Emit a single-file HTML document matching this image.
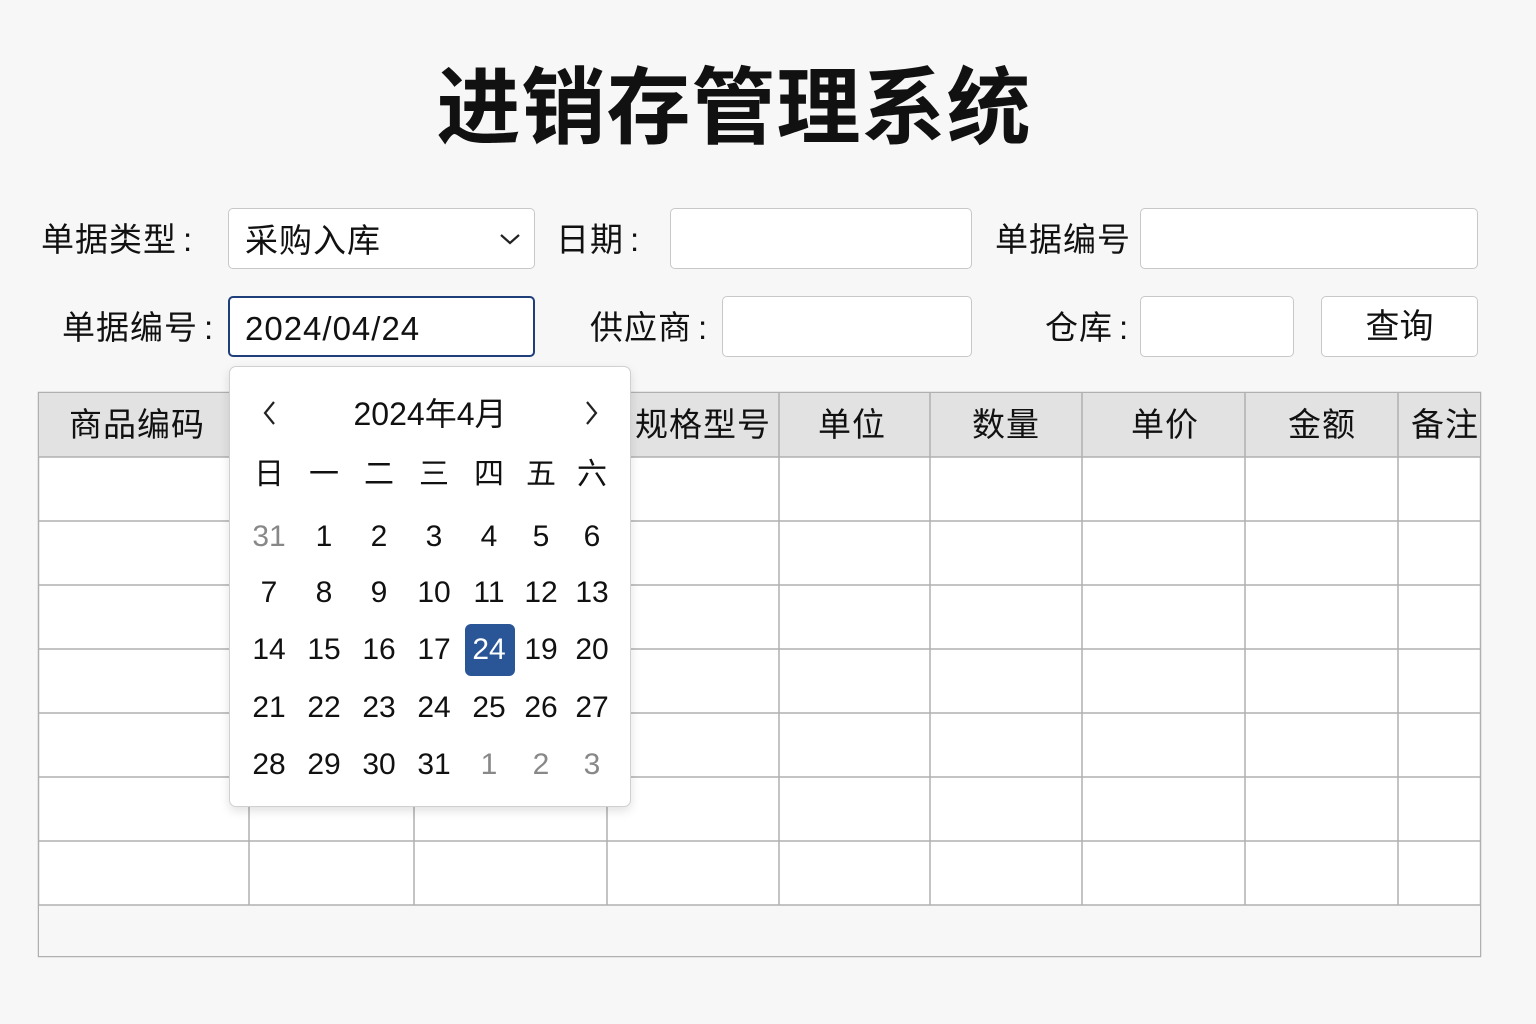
<!DOCTYPE html>
<html><head><meta charset="utf-8"><style>
*{box-sizing:border-box;margin:0;padding:0}
body{width:1536px;height:1024px;background:#f7f7f7;font-family:"Liberation Sans","Noto Sans CJK SC",sans-serif;color:#111;position:relative;overflow:hidden}
.a{position:absolute}
.lbl{position:absolute;font-size:33px;line-height:40px;letter-spacing:1px}
.lbl i{font-style:normal;margin-left:6px}
.box{position:absolute;background:#fff;border:1.5px solid #c8c8c8;border-radius:5px}
.c{position:absolute;font-size:30px;text-align:center;width:50px;margin-left:-25px;line-height:36px}
.g{color:#888}
</style></head><body>
<div class="a" style="left:0;width:1468px;top:56px;text-align:center;font-size:84px;font-weight:bold;line-height:104px;letter-spacing:1px">进销存管理系统</div>

<div class="lbl" style="left:41px;top:220px">单据类型<i>:</i></div>
<div class="box" style="left:228px;top:208px;width:307px;height:61px"></div>
<div class="lbl" style="left:245px;top:221px">采购入库</div>
<svg class="a" style="left:499px;top:231px" width="22" height="16"><path d="M2 4 L11 12 L20 4" fill="none" stroke="#222" stroke-width="2.2"/></svg>
<div class="lbl" style="left:556px;top:220px">日期<i>:</i></div>
<div class="box" style="left:670px;top:208px;width:302px;height:61px"></div>
<div class="lbl" style="left:995px;top:220px">单据编号</div>
<div class="box" style="left:1140px;top:208px;width:338px;height:61px"></div>

<div class="lbl" style="left:62px;top:308px">单据编号<i>:</i></div>
<div class="box" style="left:228px;top:296px;width:307px;height:61px;border:2px solid #1f3f7a"></div>
<div class="lbl" style="left:245px;top:309px">2024/04/24</div>
<div class="lbl" style="left:590px;top:308px">供应商<i>:</i></div>
<div class="box" style="left:722px;top:296px;width:250px;height:61px"></div>
<div class="lbl" style="left:1045px;top:308px">仓库<i>:</i></div>
<div class="box" style="left:1140px;top:296px;width:154px;height:61px"></div>
<div class="box" style="left:1321px;top:296px;width:157px;height:61px;text-align:center;font-size:34px;line-height:60px">查询</div>

<svg class="a" style="left:0;top:0" width="1536" height="1024">
<rect x="38.5" y="392.5" width="1442" height="564" fill="#fff" stroke="#b0b0b0" stroke-width="1.5"/>
<rect x="39" y="393" width="1441" height="64" fill="#e2e2e2"/>
<rect x="39" y="905" width="1441" height="51" fill="#f7f7f7"/>
<g stroke="#b0b0b0" stroke-width="1.5">
<line x1="38" y1="457" x2="1480" y2="457"/><line x1="38" y1="521" x2="1480" y2="521"/><line x1="38" y1="585" x2="1480" y2="585"/><line x1="38" y1="649" x2="1480" y2="649"/><line x1="38" y1="713" x2="1480" y2="713"/><line x1="38" y1="777" x2="1480" y2="777"/><line x1="38" y1="841" x2="1480" y2="841"/><line x1="38" y1="905" x2="1480" y2="905"/>
<line x1="249" y1="392" x2="249" y2="905"/><line x1="414" y1="392" x2="414" y2="905"/><line x1="607" y1="392" x2="607" y2="905"/><line x1="779" y1="392" x2="779" y2="905"/><line x1="930" y1="392" x2="930" y2="905"/><line x1="1082" y1="392" x2="1082" y2="905"/><line x1="1245" y1="392" x2="1245" y2="905"/><line x1="1398" y1="392" x2="1398" y2="905"/>
</g></svg>
<div class="lbl" style="left:69px;top:405px">商品编码</div>
<div class="lbl" style="left:635px;top:405px">规格型号</div>
<div class="lbl" style="left:818px;top:405px">单位</div>
<div class="lbl" style="left:972px;top:405px">数量</div>
<div class="lbl" style="left:1131px;top:405px">单价</div>
<div class="lbl" style="left:1288px;top:405px">金额</div>
<div class="lbl" style="left:1411px;top:405px">备注</div>

<div class="a" style="left:229px;top:366px;width:402px;height:441px;background:#fff;border:1px solid #d0d0d0;border-radius:7px;box-shadow:0 4px 10px rgba(0,0,0,.12)"></div>
<svg class="a" style="left:262px;top:400px" width="16" height="26"><path d="M12 2 L3 13 L12 24" fill="none" stroke="#222" stroke-width="2.2"/></svg>
<svg class="a" style="left:583px;top:400px" width="16" height="26"><path d="M4 2 L13 13 L4 24" fill="none" stroke="#222" stroke-width="2.2"/></svg>
<div class="a" style="left:229px;width:402px;top:394px;text-align:center;font-size:32px;line-height:40px">2024年4月</div>
<div class="a" style="left:465px;top:624px;width:50px;height:52px;background:#2a5597;border-radius:6px"></div>
<div id="cal"></div>
<script>
var xs=[269,324,379,434,489,541,592],ys=[475,537,593,650,708,765];
var rows=[["日","一","二","三","四","五","六"],["31","1","2","3","4","5","6"],["7","8","9","10","11","12","13"],["14","15","16","17","24","19","20"],["21","22","23","24","25","26","27"],["28","29","30","31","1","2","3"]];
var h="";
rows.forEach(function(r,i){r.forEach(function(t,j){var g=(i==1&&j==0)||(i==5&&j>3);var w=(i==3&&j==4);
h+='<div class="c'+(g?' g':'')+'" style="left:'+xs[j]+'px;top:'+(ys[i]-18)+'px'+(w?';color:#fff':'')+'">'+t+'</div>';});});
document.getElementById("cal").innerHTML=h;
</script>
</body></html>
